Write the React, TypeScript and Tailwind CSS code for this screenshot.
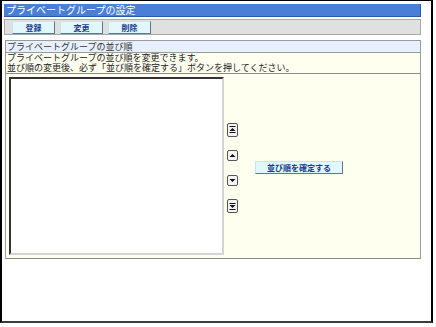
const JP = "font-['Noto_Sans_CJK_JP','Noto_Sans',sans-serif]";

function ToolButton({ label }: { label: string }) {
  return (
    <button className="w-[43px] h-[13px] bg-[#e2f7ff] border border-t-[#c8e4f0] border-l-[#c8e4f0] border-r-[#5a7a8c] border-b-[#5a7a8c] text-[8px] leading-[11px] font-bold text-[#1a3c8c]">
      {label}
    </button>
  );
}

function ArrowButton({ kind }: { kind: "top" | "up" | "down" | "bottom" }) {
  const tall = kind === "top" || kind === "bottom";
  return (
    <button
      className={`w-[11px] ${tall ? "h-[14px]" : "h-[11px]"} bg-[#f4f4f4] border border-[#555] rounded-[2px] flex items-center justify-center`}
    >
      <svg width="7" height={tall ? 10 : 7} viewBox={tall ? "0 0 7 10" : "0 0 7 7"}>
        {kind === "top" && (
          <g fill="#111">
            <rect x="0.5" y="1" width="6" height="1" />
            <polygon points="3.5,3 6.5,6 0.5,6" />
            <rect x="0.5" y="7" width="6" height="1" />
          </g>
        )}
        {kind === "up" && <polygon points="3.5,2 6.5,5 0.5,5" fill="#111" />}
        {kind === "down" && <polygon points="0.5,2 6.5,2 3.5,5" fill="#111" />}
        {kind === "bottom" && (
          <g fill="#111">
            <rect x="0.5" y="2" width="6" height="1" />
            <polygon points="0.5,4 6.5,4 3.5,7" />
            <rect x="0.5" y="8" width="6" height="1" />
          </g>
        )}
      </svg>
    </button>
  );
}

export default function App() {
  return (
    <div className={`w-[436px] h-[327px] bg-white ${JP}`}>
      <div className="w-[433px] h-[323px] border-t border-l-2 border-r-2 border-b-2 border-t-black border-l-black border-r-black border-b-[#3c3c3c] pt-[3px] pl-[2px]">
        {/* title */}
        <div className="w-[417px] h-[13px] bg-[#4a7fd6] border-r border-b border-[#2c5aa8] text-white text-[10px] leading-[12px] pl-[2px]">
          プライベートグループの設定
        </div>

        {/* toolbar */}
        <div className="w-[417px] h-[16px] mt-[2px] bg-[#e0e0e0] border border-[#a8a8a8] flex items-center gap-[5px] pl-[7px]">
          <ToolButton label="登録" />
          <ToolButton label="変更" />
          <ToolButton label="削除" />
        </div>

        {/* section */}
        <div className="w-[416px] ml-[1px] mt-[5px] border border-[#9a9a9a] border-b-[#888]">
          <div className="h-[12px] bg-[#e6f0ff] border-b border-[#9a9a9a] text-[#333] text-[9px] leading-[12px] pl-[1px]">
            プライベートグループの並び順
          </div>
          <div className="bg-[#fffff0] border-b border-[#8c8c8c] text-[#222] text-[9px] leading-[10px] pl-[1px]">
            <div>プライベートグループの並び順を変更できます。</div>
            <div>並び順の変更後、必ず「並び順を確定する」ボタンを押してください。</div>
          </div>
          <div className="h-[184px] bg-[#fffff0] flex pt-[3px] pl-[3px]">
            <div className="w-[215px] h-[178px] bg-white border-2 border-t-[#333] border-l-[#333] border-r-[#d4d4d4] border-b-[#d4d4d4]" />
            <div className="flex-1 flex items-center">
              <div className="flex flex-col ml-[3px] items-start">
                <ArrowButton kind="top" />
                <div className="mt-[13px]">
                  <ArrowButton kind="up" />
                </div>
                <div className="mt-[14px]">
                  <ArrowButton kind="down" />
                </div>
                <div className="mt-[13px]">
                  <ArrowButton kind="bottom" />
                </div>
              </div>
              <button className="ml-[17px] w-[88px] h-[13px] bg-[#e2f7ff] border border-t-[#c8e4f0] border-l-[#c8e4f0] border-r-[#5a7a8c] border-b-[#5a7a8c] text-[8px] leading-[11px] font-bold text-[#1a3c8c]">
                並び順を確定する
              </button>
            </div>
          </div>
        </div>
      </div>
    </div>
  );
}
